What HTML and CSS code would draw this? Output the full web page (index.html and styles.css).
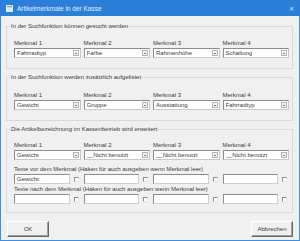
FILE: index.html
```html
<!DOCTYPE html>
<html>
<head>
    <meta charset="UTF-8">
    <title>Artikelmerkmale in der Kasse</title>
    <link rel="stylesheet" href="styles.css">
</head>
<body>
    <div class="window">
        <div class="titlebar">
            <svg class="app-icon" width="7" height="7" viewBox="0 0 7 7">
                <rect x="0.5" y="0.5" width="6" height="6" fill="#ffffff" stroke="#d8e6f5"/>
                <rect x="1" y="1" width="5" height="1.5" fill="#7fa7cf"/>
                <rect x="1.5" y="3.5" width="4" height="2" fill="#c9d9ea"/>
            </svg>
            <span class="title">Artikelmerkmale in der Kasse</span>
            <span class="close">&#x2715;</span>
        </div>

        <div class="content">
            <fieldset class="group first">
                <legend>In der Suchfunktion können gesucht werden</legend>
                <div class="inner">
                    <div class="cols">
                        <div class="field"><label>Merkmal 1</label><div class="combo"><span>Fahrradtyp</span><i class="drop"></i></div></div>
                        <div class="field"><label>Merkmal 2</label><div class="combo"><span>Farbe</span><i class="drop"></i></div></div>
                        <div class="field"><label>Merkmal 3</label><div class="combo"><span>Rahmenhöhe</span><i class="drop"></i></div></div>
                        <div class="field"><label>Merkmal 4</label><div class="combo"><span>Schaltung</span><i class="drop"></i></div></div>
                    </div>
                </div>
            </fieldset>

            <fieldset class="group second">
                <legend>In der Suchfunktion werden zusätzlich aufgelistet</legend>
                <div class="inner">
                    <div class="cols">
                        <div class="field"><label>Merkmal 1</label><div class="combo"><span>Gewicht</span><i class="drop"></i></div></div>
                        <div class="field"><label>Merkmal 2</label><div class="combo"><span>Gruppe</span><i class="drop"></i></div></div>
                        <div class="field"><label>Merkmal 3</label><div class="combo"><span>Ausstattung</span><i class="drop"></i></div></div>
                        <div class="field"><label>Merkmal 4</label><div class="combo"><span>Fahrradtyp</span><i class="drop"></i></div></div>
                    </div>
                </div>
            </fieldset>

            <fieldset class="group third">
                <legend>Die Artikelbezeichnung im Kassenbetrieb wird erweitert</legend>
                <div class="inner">
                    <div class="cols">
                        <div class="field"><label>Merkmal 1</label><div class="combo"><span>Gewicht</span><i class="drop"></i></div></div>
                        <div class="field"><label>Merkmal 2</label><div class="combo"><span>__Nicht benutzt</span><i class="drop"></i></div></div>
                        <div class="field"><label>Merkmal 3</label><div class="combo"><span>__Nicht benutzt</span><i class="drop"></i></div></div>
                        <div class="field"><label>Merkmal 4</label><div class="combo"><span>__Nicht benutzt</span><i class="drop"></i></div></div>
                    </div>

                    <div class="caption">Texte vor dem Merkmal (Haken für auch ausgeben wenn Merkmal leer)</div>
                    <div class="cols">
                        <div class="textcheck"><div class="textbox">Gewicht:</div><i class="check"></i></div>
                        <div class="textcheck"><div class="textbox"></div><i class="check"></i></div>
                        <div class="textcheck"><div class="textbox"></div><i class="check"></i></div>
                        <div class="textcheck"><div class="textbox"></div><i class="check"></i></div>
                    </div>

                    <div class="caption">Texte nach dem Merkmal (Haken für auch ausgeben wenn Merkmal leer)</div>
                    <div class="cols">
                        <div class="textcheck"><div class="textbox"></div><i class="check"></i></div>
                        <div class="textcheck"><div class="textbox"></div><i class="check"></i></div>
                        <div class="textcheck"><div class="textbox"></div><i class="check"></i></div>
                        <div class="textcheck"><div class="textbox"></div><i class="check"></i></div>
                    </div>
                </div>
            </fieldset>

            <div class="buttons">
                <button class="btn">OK</button>
                <button class="btn">Abbrechen</button>
            </div>
        </div>
    </div>
</body>
</html>
```

FILE: styles.css
```css
body {
    margin: 0;
    background-color: #f0f0f0;
    font-family: "Liberation Sans", Arial, sans-serif;
    font-size: 6px;
    color: #3a3a3a;
}
.window {
    width: 300px;
    height: 241px;
    box-sizing: border-box;
    border: 1px solid #3d8fe3;
    border-top: none;
    background-color: #f0f0f0;
    display: flex;
    flex-direction: column;
}
.titlebar {
    height: 16px;
    margin: 0 -1px;
    background-color: #2b7fd8;
    display: flex;
    align-items: center;
    padding: 0 6px 0 6px;
    color: #fff;
}
.app-icon {
    display: block;
    margin-right: 4px;
}
.title {
    flex: 1;
    font-size: 6.5px;
    color: #e3eefa;
}
.close {
    font-size: 6px;
    color: #dcebfa;
}
.content {
    flex: 1;
    padding: 6px 6px 0 5px;
    display: flex;
    flex-direction: column;
    gap: 4px;
}
.group {
    margin: 0;
    padding: 0;
    border: 1px solid #d9d9d9;
    min-width: 0;
}
.group legend {
    margin-left: 3px;
    padding: 0 1px;
    line-height: 8px;
}
.inner {
    padding: 9px 3px 10px 7px;
}
.second .inner {
    padding-top: 10px;
}
.third .inner {
    padding-top: 8px;
    padding-bottom: 8px;
}
.cols {
    display: grid;
    grid-template-columns: repeat(4, 1fr);
    column-gap: 3px;
}
.field label {
    display: block;
    line-height: 8px;
    margin-bottom: 1px;
}
.combo {
    height: 10px;
    box-sizing: border-box;
    background-color: #fff;
    border: 1px solid #8c8c8c;
    border-right-color: #c8c8c8;
    border-bottom-color: #c8c8c8;
    display: flex;
    align-items: center;
    padding-left: 2px;
}
.combo span {
    flex: 1;
    white-space: nowrap;
    overflow: hidden;
}
.drop {
    width: 6px;
    height: 6px;
    margin-right: 1px;
    box-sizing: border-box;
    border: 1px solid #b4b4b4;
    background-color: #f4f4f4;
    position: relative;
}
.drop::after {
    content: "";
    position: absolute;
    left: 1px;
    top: 1.5px;
    border-left: 1px solid transparent;
    border-right: 1px solid transparent;
    border-top: 1.5px solid #000;
}
.caption {
    line-height: 8px;
    margin: 5px 0 1px;
}
.caption + .cols + .caption {
    margin-top: 1px;
}
.textcheck {
    display: flex;
    align-items: center;
    gap: 4px;
}
.textbox {
    flex: 1;
    height: 10px;
    box-sizing: border-box;
    background-color: #fff;
    border: 1px solid #8c8c8c;
    border-right-color: #d0d0d0;
    border-bottom-color: #d0d0d0;
    padding-left: 2px;
    line-height: 8px;
}
.check {
    width: 5px;
    height: 5px;
    box-sizing: border-box;
    background-color: #fff;
    border: 1px solid #8c8c8c;
    border-right-color: #e6e6e6;
    border-bottom-color: #e6e6e6;
    margin-right: 2px;
}
.buttons {
    display: flex;
    justify-content: space-between;
    padding: 4px 0 0 1px;
}
.btn {
    width: 42px;
    height: 16px;
    padding: 0;
    font-family: "Liberation Sans", Arial, sans-serif;
    font-size: 6px;
    color: #3a3a3a;
    background-color: #f0f0f0;
    border: 1px solid;
    border-color: #fff #696969 #696969 #fff;
    box-shadow: inset -1px -1px 0 #a0a0a0;
}
```
